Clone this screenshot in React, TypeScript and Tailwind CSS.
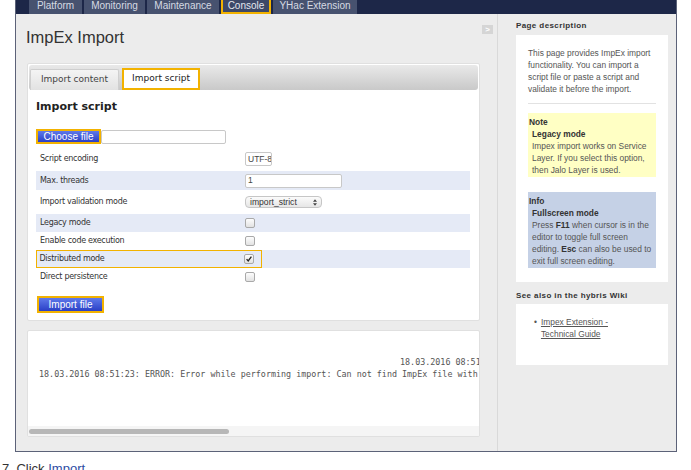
import React from 'react'

const navTabs = [
  { label: 'Platform', w: 'w-[53px]' },
  { label: 'Monitoring', w: 'w-[61px]' },
  { label: 'Maintenance', w: 'w-[72px]' },
  { label: 'Console', w: 'w-[50px]', active: true },
  { label: 'YHac Extension', w: 'w-[84px]' },
]

function Checkbox({ checked }: { checked?: boolean }) {
  return (
    <span className="flex h-[10px] w-[10px] items-center justify-center rounded-[2px] border border-[#a9a9a9] bg-linear-to-b from-[#fdfdfd] to-[#e2e2e2]">
      {checked && (
        <svg viewBox="0 0 10 10" className="h-[8px] w-[8px]">
          <path d="M2 5.2 L4 7.5 L8 2" fill="none" stroke="#222" strokeWidth={1.6} />
        </svg>
      )}
    </span>
  )
}

function Label({ children }: { children: React.ReactNode }) {
  return (
    <span className="w-[209px] shrink-0 pl-[4px] font-['DejaVu_Sans',sans-serif] text-[8px] tracking-[-0.3px] text-[#333]">
      {children}
    </span>
  )
}

export default function App() {
  return (
    <div className="h-[470px] w-[691px] overflow-hidden bg-white font-['Liberation_Sans',Arial,sans-serif]">
      <div className="ml-[15px] w-[662px] border-x border-b border-[#5c6278]">
        {/* Top navigation */}
        <div className="flex h-[14px] gap-[2px] bg-[#1d2748] pl-[13px]">
          {navTabs.map((t) => (
            <div
              key={t.label}
              className={`${t.w} flex h-[14px] justify-center text-[10px] leading-[11px] ${
                t.active
                  ? 'border-x-2 border-b-2 border-[#f2b200] bg-[#3d4868] text-[#e4e7ee]'
                  : 'bg-[#47526f] text-[#d6dae3]'
              }`}
            >
              {t.label}
            </div>
          ))}
        </div>

        <div className="flex h-[437px] bg-[#ececec]">
          {/* Main column */}
          <div className="w-[482px] shrink-0 border-r border-[#d9d9d9]">
            <div className="flex items-start justify-between pr-[4px] pl-[10px] pt-[13px]">
              <h1 className="text-[16.5px] leading-[20px] text-[#333]">ImpEx Import</h1>
              <span className="mt-[-2px] flex h-[9px] w-[11px] items-center justify-center bg-[#d5d5d5] text-[8px] font-bold leading-none text-white">
                &gt;
              </span>
            </div>

            {/* Import card */}
            <div className="ml-[11px] mt-[16px] w-[453px] rounded-[2px] border border-[#e0e0e0] bg-white pb-[7px]">
              <div className="m-[1px] flex h-[25px] items-end gap-[3px] rounded-[3px] bg-linear-to-b from-[#e9e9e9] to-[#c9c9c9] pl-[1px]">
                <div className="flex h-[21px] w-[89px] items-center justify-center rounded-t-[2px] border border-b-0 border-[#cfcfcf] bg-linear-to-b from-[#f4f4f4] to-[#e2e2e2] font-['DejaVu_Sans',sans-serif] text-[9px] text-[#444]">
                  Import content
                </div>
                <div className="flex h-[22px] w-[78px] items-center justify-center border-2 border-[#f2b200] bg-white font-['DejaVu_Sans',sans-serif] text-[9px] text-[#222]">
                  Import script
                </div>
              </div>

              <div className="px-[8px]">
                <h2 className="mt-[10px] font-['DejaVu_Sans',sans-serif] text-[11px] font-bold leading-[14px] text-[#222]">
                  Import script
                </h2>

                <div className="mt-[15px] flex items-center">
                  <button className="flex h-[15px] w-[65px] items-center justify-center border-2 border-[#f2b200] bg-linear-to-b from-[#6079ea] to-[#2b3ec6] text-[10px] leading-none text-white">
                    Choose file
                  </button>
                  <span className="h-[14px] w-[125px] rounded-[2px] border border-[#c8c8c8] bg-white" />
                </div>

                <div className="mt-[3px] w-[434px]">
                  <div className="flex h-[24px] items-center">
                    <Label>Script encoding</Label>
                    <span className="flex h-[14px] w-[27px] items-center overflow-hidden whitespace-nowrap rounded-[2px] border border-[#c8c8c8] bg-white pl-[2px] text-[8.5px] text-[#444]">
                      UTF-8
                    </span>
                  </div>
                  <div className="flex h-[19px] items-center bg-[#e5eaf6]">
                    <Label>Max. threads</Label>
                    <span className="flex h-[14px] w-[97px] items-center rounded-[2px] border border-[#c8c8c8] bg-white pl-[2px] text-[8.5px] text-[#444]">
                      1
                    </span>
                  </div>
                  <div className="flex h-[24px] items-center">
                    <Label>Import validation mode</Label>
                    <span className="flex h-[12px] w-[77px] items-center justify-between rounded-[4px] border border-[#c6c6c6] bg-linear-to-b from-[#fbfbfb] to-[#e6e6e6] px-[4px] text-[8.6px] text-[#333]">
                      import_strict
                      <svg viewBox="0 0 6 10" className="h-[7px] w-[4px]">
                        <path d="M0 4 L3 0 L6 4 Z M0 6 L3 10 L6 6 Z" fill="#444" />
                      </svg>
                    </span>
                  </div>
                  <div className="flex h-[18px] items-center bg-[#e5eaf6]">
                    <Label>Legacy mode</Label>
                    <Checkbox />
                  </div>
                  <div className="flex h-[18px] items-center">
                    <Label>Enable code execution</Label>
                    <Checkbox />
                  </div>
                  <div className="flex h-[18px] items-center bg-[#e5eaf6]">
                    <div className="flex h-[18px] w-[226px] items-center border-[1.5px] border-[#f2b200]">
                      <span className="w-[207px] shrink-0 pl-[2.5px] font-['DejaVu_Sans',sans-serif] text-[8px] tracking-[-0.3px] text-[#333]">
                        Distributed mode
                      </span>
                      <Checkbox checked />
                    </div>
                  </div>
                  <div className="flex h-[17px] items-center">
                    <Label>Direct persistence</Label>
                    <Checkbox />
                  </div>
                </div>

                <button className="mt-[11px] ml-[1px] flex h-[17px] w-[67px] items-center justify-center border-2 border-[#f2b200] bg-linear-to-b from-[#6079ea] to-[#2b3ec6] text-[10px] leading-none text-white">
                  Import file
                </button>
              </div>
            </div>

            {/* Console output */}
            <div className="ml-[11px] mt-[9px] flex h-[107px] w-[453px] flex-col overflow-hidden rounded-[2px] border border-[#e0e0e0] bg-white">
              <div className="flex-1 overflow-hidden whitespace-pre pl-[11px] pt-[25px] font-['DejaVu_Sans_Mono',monospace] text-[8.4px] leading-[12px] text-[#555]">
                <div className="pl-[361px]">18.03.2016 08:51:23: INFO</div>
                <div>18.03.2016 08:51:23: ERROR: Error while performing import: Can not find ImpEx file with name</div>
              </div>
              <div className="flex h-[10px] items-center bg-[#f5f5f5] pl-[1px]">
                <span className="h-[5px] w-[200px] rounded-full bg-[#b7b7b7]" />
              </div>
            </div>
          </div>

          {/* Sidebar */}
          <div className="flex-1 pl-[18px] pr-[8px] pt-[7px]">
            <h3 className="text-[8px] font-bold leading-[10px] tracking-[0.4px] text-[#333]">
              Page description
            </h3>
            <div className="mt-[4px] bg-white px-[12px] pt-[12px] pb-[14px] text-[8.4px] leading-[12px] text-[#555]">
              <p>
                This page provides ImpEx import
                <br />
                functionality. You can import a
                <br />
                script file or paste a script and
                <br />
                validate it before the import.
              </p>
              <div className="mt-[8px] h-px bg-[#e2e2e2]" />
              <div className="mt-[9px] bg-[#ffffc4] pt-[3px] pb-[1px] pl-[1px]">
                <div className="font-bold text-[#333]">Note</div>
                <div className="pl-[3px]">
                  <div className="font-bold text-[#333]">Legacy mode</div>
                  Impex import works on Service
                  <br />
                  Layer. If you select this option,
                  <br />
                  then Jalo Layer is used.
                </div>
              </div>
              <div className="mt-[15px] bg-[#c5d1e6] pt-[3px] pb-[1px] pl-[1px]">
                <div className="font-bold text-[#333]">Info</div>
                <div className="pl-[3px]">
                  <div className="font-bold text-[#333]">Fullscreen mode</div>
                  Press <b className="text-[#333]">F11</b> when cursor is in the
                  <br />
                  editor to toggle full screen
                  <br />
                  editing. <b className="text-[#333]">Esc</b> can also be used to
                  <br />
                  exit full screen editing.
                </div>
              </div>
            </div>

            <h3 className="mt-[9px] text-[8px] font-bold leading-[10px] tracking-[0.4px] text-[#333]">
              See also in the hybris Wiki
            </h3>
            <div className="mt-[3px] h-[61px] bg-white pl-[18px] pt-[12px] text-[8.4px] leading-[12px] text-[#555]">
              <div className="flex gap-[4px]">
                <span>•</span>
                <a className="underline">
                  Impex Extension -
                  <br />
                  Technical Guide
                </a>
              </div>
            </div>
          </div>
        </div>
      </div>

      <p className="ml-[2px] mt-[9px] text-[13px] leading-[16px] text-[#333]">
        7. Click <span className="text-[#2d4ba3]">Import</span>
      </p>
    </div>
  )
}
